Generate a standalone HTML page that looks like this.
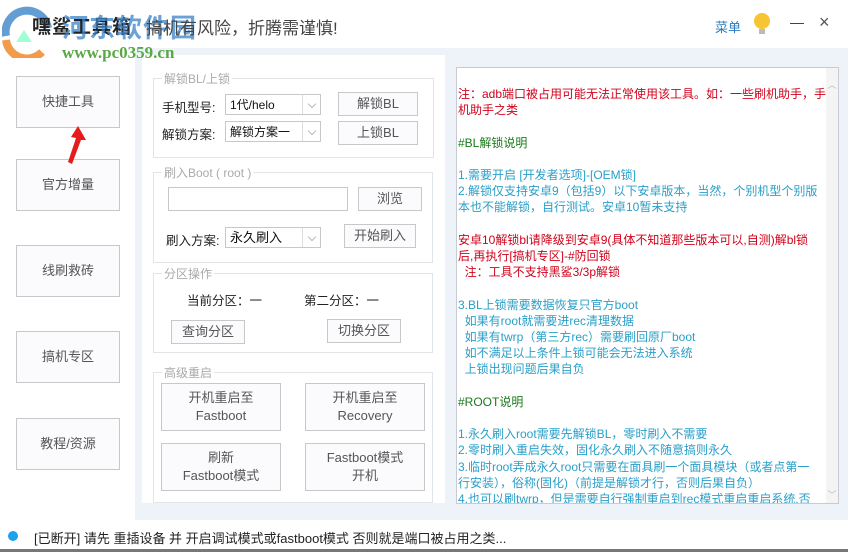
<!DOCTYPE html>
<html><head><meta charset="utf-8">
<style>
*{margin:0;padding:0;box-sizing:border-box}
body{width:848px;height:552px;overflow:hidden;background:#fff;font-family:"Liberation Sans","Noto Sans CJK SC",sans-serif;position:relative;color:#333}
.a{position:absolute}
.btn{position:absolute;border:1px solid #c8c8c8;background:#fbfbfd;font-size:13px;color:#555;display:flex;align-items:center;justify-content:center;text-align:center;line-height:18px}
.fs{position:absolute;border:1px solid #e2e4e8}
.lg{position:absolute;top:-9px;left:8px;background:#fff;padding:0 2px;font-size:12px;color:#aaa}
.sel{position:absolute;border:1px solid #c8c8c8;background:#fff;font-size:12px;color:#111;padding-left:4px;line-height:20px}
.sel:after{content:"";position:absolute;right:0;top:0;width:17px;height:100%;border-left:1px solid #ddd}
.sel i{position:absolute;right:5px;top:6px;width:6px;height:6px;border-right:1px solid #bbb;border-bottom:1px solid #bbb;transform:rotate(45deg)}
.lbl{position:absolute;font-size:12.5px;color:#222}
.txt{font-family:"Liberation Sans","Noto Sans CJK SC",sans-serif;font-size:12px;line-height:16.2px;white-space:pre}
.r{color:#d0021b}.g{color:#1a7a1a}.b{color:#2a9fc8}
</style></head><body>
<!-- bodies -->
<div class="a" style="left:0;top:48px;width:848px;height:472px;background:#eef3f9"></div>
<div class="a" style="left:0;top:48px;width:135px;height:472px;background:#fff"></div>
<div class="a" style="left:142px;top:55px;width:303px;height:448px;background:#fff"></div>
<!-- left buttons -->
<div class="btn" style="left:16px;top:76px;width:104px;height:52px">快捷工具</div>
<div class="btn" style="left:16px;top:159px;width:104px;height:52px">官方增量</div>
<div class="btn" style="left:16px;top:245px;width:104px;height:52px">线刷救砖</div>
<div class="btn" style="left:16px;top:331px;width:104px;height:52px">搞机专区</div>
<div class="btn" style="left:16px;top:418px;width:104px;height:52px">教程/资源</div>
<svg class="a" style="left:60px;top:124px" width="30" height="42"><path d="M18 2 L26 16 L21 16 L12 40 L8 38 L16 14 L11 13 Z" fill="#e51c1c"/></svg>
<!-- BL -->
<div class="fs" style="left:153px;top:78px;width:281px;height:80px"><span class="lg">解锁BL/上锁</span></div>
<div class="lbl" style="left:162px;top:97px">手机型号:</div>
<div class="sel" style="left:225px;top:94px;width:96px;height:21px">1代/helo<i></i></div>
<div class="btn" style="left:338px;top:92px;width:80px;height:24px">解锁BL</div>
<div class="lbl" style="left:162px;top:124px">解锁方案:</div>
<div class="sel" style="left:225px;top:121px;width:96px;height:21px">解锁方案一<i></i></div>
<div class="btn" style="left:338px;top:121px;width:80px;height:24px">上锁BL</div>
<!-- Boot -->
<div class="fs" style="left:153px;top:172px;width:280px;height:91px"><span class="lg">刷入Boot ( root )</span></div>
<div class="a" style="left:168px;top:187px;width:180px;height:24px;border:1px solid #c8c8c8"></div>
<div class="btn" style="left:358px;top:187px;width:64px;height:24px">浏览</div>
<div class="lbl" style="left:166px;top:230px">刷入方案:</div>
<div class="sel" style="left:225px;top:227px;width:96px;height:21px;font-size:13px">永久刷入<i></i></div>
<div class="btn" style="left:344px;top:224px;width:72px;height:24px">开始刷入</div>
<!-- partition -->
<div class="fs" style="left:153px;top:273px;width:280px;height:80px"><span class="lg">分区操作</span></div>
<div class="lbl" style="left:187px;top:290px">当前分区：一</div>
<div class="lbl" style="left:304px;top:290px">第二分区：一</div>
<div class="btn" style="left:171px;top:320px;width:74px;height:24px">查询分区</div>
<div class="btn" style="left:327px;top:319px;width:74px;height:24px">切换分区</div>
<!-- reboot -->
<div class="fs" style="left:153px;top:372px;width:280px;height:131px"><span class="lg">高级重启</span></div>
<div class="btn" style="left:161px;top:383px;width:120px;height:48px">开机重启至<br>Fastboot</div>
<div class="btn" style="left:305px;top:383px;width:120px;height:48px">开机重启至<br>Recovery</div>
<div class="btn" style="left:161px;top:443px;width:120px;height:48px">刷新<br>Fastboot模式</div>
<div class="btn" style="left:305px;top:443px;width:120px;height:48px">Fastboot模式<br>开机</div>
<!-- text box -->
<div class="a" style="left:456px;top:67px;width:383px;height:437px;background:#fff;border:1px solid #c8ccd2;overflow:hidden">
<div class="a" style="right:0;top:0;width:12px;height:435px;background:#f4f4f4"></div>
<div class="a" style="right:0;top:10px;width:12px;height:28px;color:#bbb;font-size:9px;text-align:center">︿</div>
<div class="a" style="right:0;top:420px;width:12px;color:#bbb;font-size:9px;text-align:center">﹀</div>
<div class="txt a" style="left:1px;top:18px"><span class="r">注：adb端口被占用可能无法正常使用该工具。如：一些刷机助手，手
机助手之类</span>

<span class="g">#BL解锁说明</span>

<span class="b">1.需要开启 [开发者选项]-[OEM锁]
2.解锁仅支持安卓9（包括9）以下安卓版本，当然，个别机型个别版
本也不能解锁，自行测试。安卓10暂未支持</span>

<span class="r">安卓10解锁bl请降级到安卓9(具体不知道那些版本可以,自测)解bl锁
后,再执行[搞机专区]-#防回锁
  注：工具不支持黑鲨3/3p解锁</span>

<span class="b">3.BL上锁需要数据恢复只官方boot
  如果有root就需要进rec清理数据
  如果有twrp（第三方rec）需要刷回原厂boot
  如不满足以上条件上锁可能会无法进入系统
  上锁出现问题后果自负</span>

<span class="g">#ROOT说明</span>

<span class="b">1.永久刷入root需要先解锁BL，零时刷入不需要
2.零时刷入重启失效，固化永久刷入不随意搞则永久
3.临时root弄成永久root只需要在面具刷一个面具模块（或者点第一
行安装），俗称(固化)（前提是解锁才行，否则后果自负）
4.也可以刷twrp，但是需要自行强制重启到rec模式重启重启系统,否
则会出现一些未知问题</span></div>
</div>
<!-- header -->
<svg class="a" style="left:2px;top:6px" width="50" height="52" viewBox="0 0 50 52"><path d="M4 30 A21 21 0 0 1 46 22" fill="none" stroke="#3b86c8" stroke-width="8" opacity=".8"/><path d="M4 34 A21 21 0 0 0 40 46" fill="none" stroke="#f08a2a" stroke-width="8" opacity=".85"/><path d="M14 36 L22 24 L30 36 Z" fill="#8fc" opacity=".8"/></svg>
<div class="a" style="left:32px;top:12px;font-size:19px;font-weight:bold;color:#222;letter-spacing:1px">嘿鲨工具箱</div>
<div class="a" style="left:62px;top:8px;font-size:26px;font-weight:bold;color:#3a84c8;opacity:.75;letter-spacing:1px">河东软件园</div>
<div class="a" style="left:146px;top:14px;font-size:17px;color:#444">搞机有风险，折腾需谨慎!</div>
<div class="a" style="left:62px;top:43px;font-size:17px;font-weight:bold;color:#5aa845;font-family:'Liberation Serif',serif;z-index:5">www.pc0359.cn</div>
<div class="a" style="left:715px;top:17px;font-size:13px;color:#2a7cc0">菜单</div>
<svg class="a" style="left:752px;top:11px" width="22" height="26"><circle cx="10" cy="10" r="8" fill="#f7c531"/><rect x="7" y="18" width="6" height="5" fill="#bbb"/></svg>
<div class="a" style="left:790px;top:23px;width:14px;height:1px;background:#444"></div>
<div class="a" style="left:819px;top:12px;font-size:18px;color:#555;line-height:20px">×</div>
<!-- status -->
<div class="a" style="left:8px;top:531px;width:10px;height:10px;border-radius:50%;background:#1ea0ee"></div>
<div class="a" style="left:34px;top:528px;font-size:13px;color:#222">[已断开] 请先 重插设备 并 开启调试模式或fastboot模式 否则就是端口被占用之类...</div>
<div class="a" style="left:0;top:549px;width:848px;height:3px;background:#777"></div>
</body></html>
